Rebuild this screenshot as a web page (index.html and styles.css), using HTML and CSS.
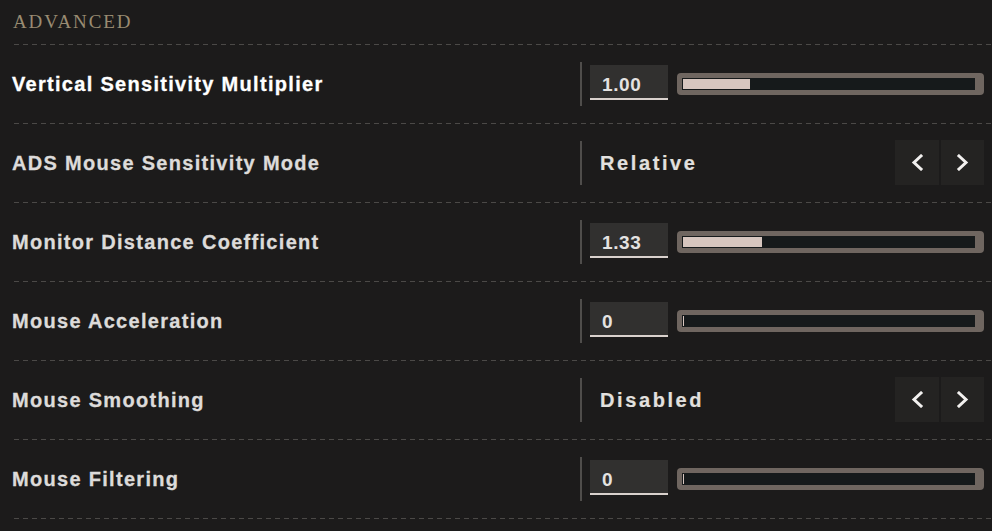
FILE: index.html
```html
<!DOCTYPE html>
<html lang="en">
<head>
  <meta charset="UTF-8">
  <title>Advanced Mouse Settings</title>
  <link rel="stylesheet" href="styles.css">
</head>
<body>

  <div class="section-title">ADVANCED</div>

  <div class="row active">
    <div class="label">Vertical Sensitivity Multiplier</div>
    <div class="control">
      <div class="value-box">1.00</div>
      <div class="slider"><div class="track"><div class="fill" style="width:23%"></div></div></div>
    </div>
  </div>

  <div class="row">
    <div class="label">ADS Mouse Sensitivity Mode</div>
    <div class="control">
      <div class="choice">Relative</div>
      <div class="arrows">
        <button class="arrow"><svg width="14" height="17" viewBox="0 0 14 17"><polyline points="11,2 4,8.5 11,15" /></svg></button>
        <button class="arrow"><svg width="14" height="17" viewBox="0 0 14 17"><polyline points="3,2 10,8.5 3,15" /></svg></button>
      </div>
    </div>
  </div>

  <div class="row">
    <div class="label">Monitor Distance Coefficient</div>
    <div class="control">
      <div class="value-box">1.33</div>
      <div class="slider"><div class="track"><div class="fill" style="width:27%"></div></div></div>
    </div>
  </div>

  <div class="row">
    <div class="label">Mouse Acceleration</div>
    <div class="control">
      <div class="value-box">0</div>
      <div class="slider"><div class="track"><div class="fill" style="width:1px"></div></div></div>
    </div>
  </div>

  <div class="row">
    <div class="label">Mouse Smoothing</div>
    <div class="control">
      <div class="choice">Disabled</div>
      <div class="arrows">
        <button class="arrow"><svg width="14" height="17" viewBox="0 0 14 17"><polyline points="11,2 4,8.5 11,15" /></svg></button>
        <button class="arrow"><svg width="14" height="17" viewBox="0 0 14 17"><polyline points="3,2 10,8.5 3,15" /></svg></button>
      </div>
    </div>
  </div>

  <div class="row">
    <div class="label">Mouse Filtering</div>
    <div class="control">
      <div class="value-box">0</div>
      <div class="slider"><div class="track"><div class="fill" style="width:1px"></div></div></div>
    </div>
  </div>

</body>
</html>
```

FILE: styles.css
```css
html, body {
  margin: 0;
  padding: 0;
  background: #1c1b1b;
  overflow: hidden;
}

body {
  font-family: "Liberation Sans", Arial, sans-serif;
  color: #dedcdb;
  width: 992px;
  height: 531px;
}

/* dashed separator drawn as a background so dash length can be tuned */
.section-title,
.row {
  background-image: repeating-linear-gradient(90deg, #4b4947 0 5px, transparent 5px 9px);
  background-repeat: no-repeat;
  background-position: 14px 100%;
  background-size: calc(100% - 14px) 1px;
}

.section-title {
  height: 44px;
  box-sizing: content-box;
  padding-bottom: 1px;
  padding-left: 13px;
  line-height: 44px;
  font-family: "Liberation Serif", "Times New Roman", serif;
  font-size: 19px;
  letter-spacing: 1.9px;
  color: #998b72;
}

.row {
  display: flex;
  align-items: center;
  height: 78px;
  padding-bottom: 1px;
  padding-left: 12px;
  padding-right: 8px;
}

.label {
  flex: 1;
  font-size: 20px;
  font-weight: bold;
  letter-spacing: 1.3px;
  -webkit-text-stroke: 0.3px currentColor;
  color: #dddbda;
}

.row.active .label {
  color: #ffffff;
}

.control {
  width: 404px;
  height: 44px;
  display: flex;
  align-items: center;
  border-left: 2px solid #4f4d4b;
  box-sizing: border-box;
}

.value-box {
  margin-left: 8px;
  width: 78px;
  height: 35px;
  box-sizing: border-box;
  padding-left: 12px;
  margin-top: -3px;
  background: #31302f;
  border-bottom: 2px solid #d9d1cd;
  font-size: 19px;
  font-weight: bold;
  letter-spacing: 0.6px;
  line-height: 39px;
  color: #e4e2e1;
}

.slider {
  margin-left: 9px;
  width: 307px;
  height: 22px;
  box-sizing: border-box;
  padding: 5px 9px 5px 5px;
  background: #6f6660;
  border-radius: 4px;
}

.track {
  height: 12px;
  background: #161a1b;
  padding: 1px 0;
  box-sizing: border-box;
}

.fill {
  height: 100%;
  margin-left: 1px;
  background: #d7c6bf;
}

.choice {
  flex: 1;
  padding-left: 18px;
  font-size: 20px;
  font-weight: bold;
  letter-spacing: 2.6px;
  -webkit-text-stroke: 0.2px currentColor;
  color: #e2e0df;
}

.arrows {
  display: flex;
  gap: 2px;
  margin-top: -2px;
}

.arrow {
  width: 44px;
  height: 45px;
  padding: 0;
  border: none;
  background: #242322;
  display: flex;
  align-items: center;
  justify-content: center;
}

.arrow:last-child {
  width: 43px;
}

.arrow svg polyline {
  fill: none;
  stroke: #f2f0ef;
  stroke-width: 3;
  stroke-linecap: square;
}
```
